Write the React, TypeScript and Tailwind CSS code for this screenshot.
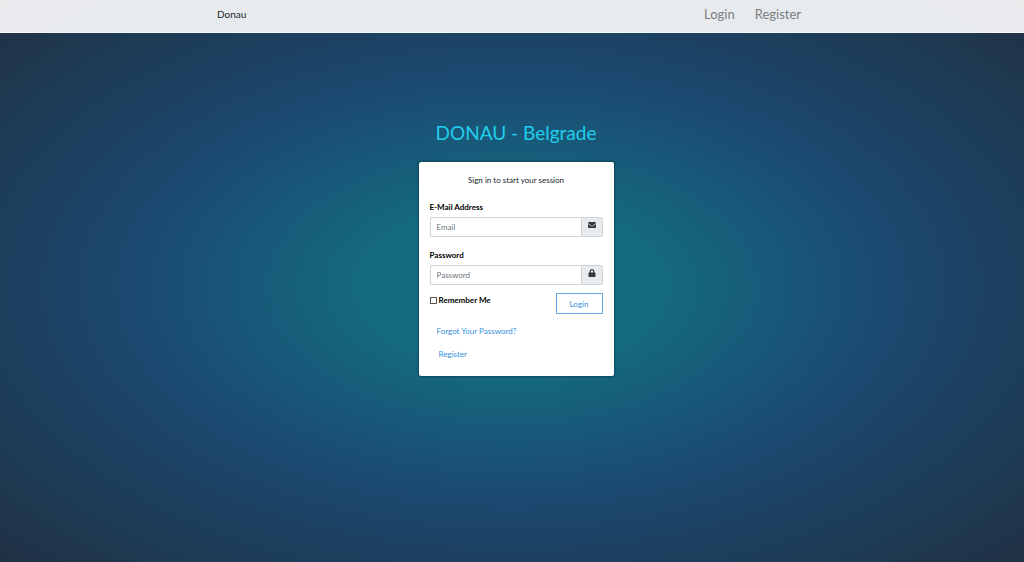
import type { ReactNode } from "react";
import { FaEnvelope, FaLock } from "react-icons/fa";

type FieldProps = {
  id: string;
  label: string;
  type: string;
  placeholder: string;
  icon: ReactNode;
};

function Field({ id, label, type, placeholder, icon }: FieldProps) {
  return (
    <div className="mb-3">
      <label htmlFor={id} className="mb-1 block font-bold text-black">
        {label}
      </label>
      <div className="flex h-5">
        <input
          id={id}
          type={type}
          placeholder={placeholder}
          className="min-w-0 flex-1 rounded-l-xs border border-r-0 border-[#ced4da] bg-white px-1.5 text-[#495057] outline-none placeholder:text-[#6c757d]"
        />
        <span className="flex w-[22px] justify-center rounded-r-xs border border-[#ced4da] bg-[#e9ecef] pt-[3px] text-[#343a40]">
          {icon}
        </span>
      </div>
    </div>
  );
}

export default function App() {
  return (
    <div className="flex min-h-screen flex-col bg-[radial-gradient(ellipse_at_50%_51%,#146f83_0%,#146a80_20%,#1b4b72_50%,#1c4163_65%,#1e3d57_78%,#212f42_100%)] font-['Lato',sans-serif]">
      <header className="border-b border-[#f4f6f8] bg-[#f8f9fa]/93">
        <nav className="mx-auto flex h-8 w-full max-w-[590px] items-center justify-between pb-[3px]">
          <a href="#home" className="text-[10px] text-[#212529]">
            Donau
          </a>
          <div className="flex gap-5 pr-1.5 text-[13px] text-[#7b7d7e]">
            <a href="#login">Login</a>
            <a href="#register">Register</a>
          </div>
        </nav>
      </header>

      <main className="flex flex-col items-center pt-[88px] pl-2">
        <h1 className="mb-[17px] text-[19px] leading-6 text-[#22cdec]">DONAU - Belgrade</h1>

        <section className="w-full max-w-[195px] rounded-xs bg-white px-[11px] pt-3 pb-4 text-[8px] leading-3 shadow-[0_0_2px_1px_rgba(0,40,60,0.45)]">
          <p className="mb-[15px] text-center text-[#212529]">Sign in to start your session</p>
          <form onSubmit={(event) => event.preventDefault()}>
            <Field
              id="email"
              label="E-Mail Address"
              type="email"
              placeholder="Email"
              icon={<FaEnvelope className="size-2" />}
            />
            <Field
              id="password"
              label="Password"
              type="password"
              placeholder="Password"
              icon={<FaLock className="size-2" />}
            />
            <div className="-mt-1 flex items-start justify-between">
              <label htmlFor="remember" className="flex items-center gap-0.5 pt-px font-bold text-black">
                <input
                  id="remember"
                  type="checkbox"
                  className="size-[7px] appearance-none border border-[#555] bg-white checked:bg-[#3490dc]"
                />
                Remember Me
              </label>
              <button
                type="submit"
                className="h-[21px] w-[47px] border border-[#63a9e3] bg-white text-[#3490dc]"
              >
                Login
              </button>
            </div>
          </form>
          <div className="mt-[11px] flex flex-col items-start gap-[11px] pl-[7px] text-[#3490dc]">
            <a href="#forgot">Forgot Your Password?</a>
            <a href="#register" className="pl-0.5">Register</a>
          </div>
        </section>
      </main>
    </div>
  );
}
